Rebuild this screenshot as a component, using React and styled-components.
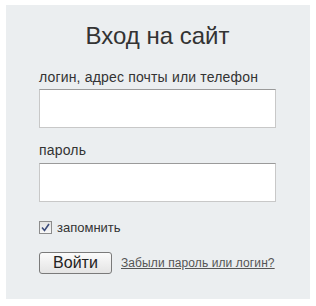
import styled, { createGlobalStyle } from "styled-components";

const GlobalStyle = createGlobalStyle`
  html, body {
    margin: 0;
    padding: 0;
    background: #ffffff;
  }
  body {
    font-family: "Liberation Sans", Arial, sans-serif;
  }
`;

const Page = styled.div`
  padding: 5px 6px;
`;

const Panel = styled.form`
  width: 304px;
  height: 294px;
  box-sizing: border-box;
  padding: 17px 34px 0 33px;
  background: #ebeef0;
  display: flex;
  flex-direction: column;
`;

const Title = styled.h1`
  margin: 0 0 19px;
  font-size: 24px;
  line-height: 28px;
  font-weight: 400;
  color: #333333;
  text-align: center;
`;

const Label = styled.label`
  display: block;
  font-size: 14px;
  letter-spacing: 0.17px;
  line-height: 16px;
  color: #333333;
  margin-bottom: ${(p) => p.$gap || 4}px;
`;

const Input = styled.input`
  display: block;
  width: 100%;
  height: 39px;
  box-sizing: border-box;
  margin: 0 0 ${(p) => p.$after || 0}px;
  border: 1px solid #c8c8c8;
  border-top-color: #9a9a9a;
  background: #ffffff;
  outline: none;
`;

const CheckRow = styled.label`
  display: flex;
  align-items: center;
  gap: 5px;
  margin-top: 19px;
  font-size: 13px;
  line-height: 13px;
  color: #333333;
`;

const Box = styled.span`
  width: 11px;
  height: 11px;
  border: 1px solid #8c8c8c;
  background: linear-gradient(#e2e2e2, #f8f8f8);
  display: flex;
  align-items: center;
  justify-content: center;
`;

const Actions = styled.div`
  display: flex;
  align-items: center;
  gap: 9px;
  margin-top: 18px;
`;

const Button = styled.button`
  flex: none;
  width: 73px;
  height: 22px;
  box-sizing: border-box;
  padding: 0;
  border: 1px solid #7a7a7a;
  border-radius: 3px;
  background: linear-gradient(#fbfbfb, #e4e4e4);
  font-family: "Liberation Sans", Arial, sans-serif;
  font-size: 16px;
  font-weight: 400;
  line-height: 20px;
  color: #222222;
`;

const Forgot = styled.a`
  white-space: nowrap;
  font-size: 12px;
  letter-spacing: 0.1px;
  color: #555555;
  text-decoration: underline;
`;

export default function App() {
  return (
    <Page>
      <GlobalStyle />
      <Panel onSubmit={(e) => e.preventDefault()}>
        <Title>Вход на сайт</Title>
        <Label>логин, адрес почты или телефон</Label>
        <Input type="text" $after={14} />
        <Label $gap={5}>пароль</Label>
        <Input type="password" />
        <CheckRow>
          <Box>
            <svg width="9" height="9" viewBox="0 0 9 9">
              <path d="M1 4.5 L3.5 7.5 L8 1" fill="none" stroke="#3b4b7a" strokeWidth="1.6" />
            </svg>
          </Box>
          запомнить
        </CheckRow>
        <Actions>
          <Button type="submit">Войти</Button>
          <Forgot href="#">Забыли пароль или логин?</Forgot>
        </Actions>
      </Panel>
    </Page>
  );
}
